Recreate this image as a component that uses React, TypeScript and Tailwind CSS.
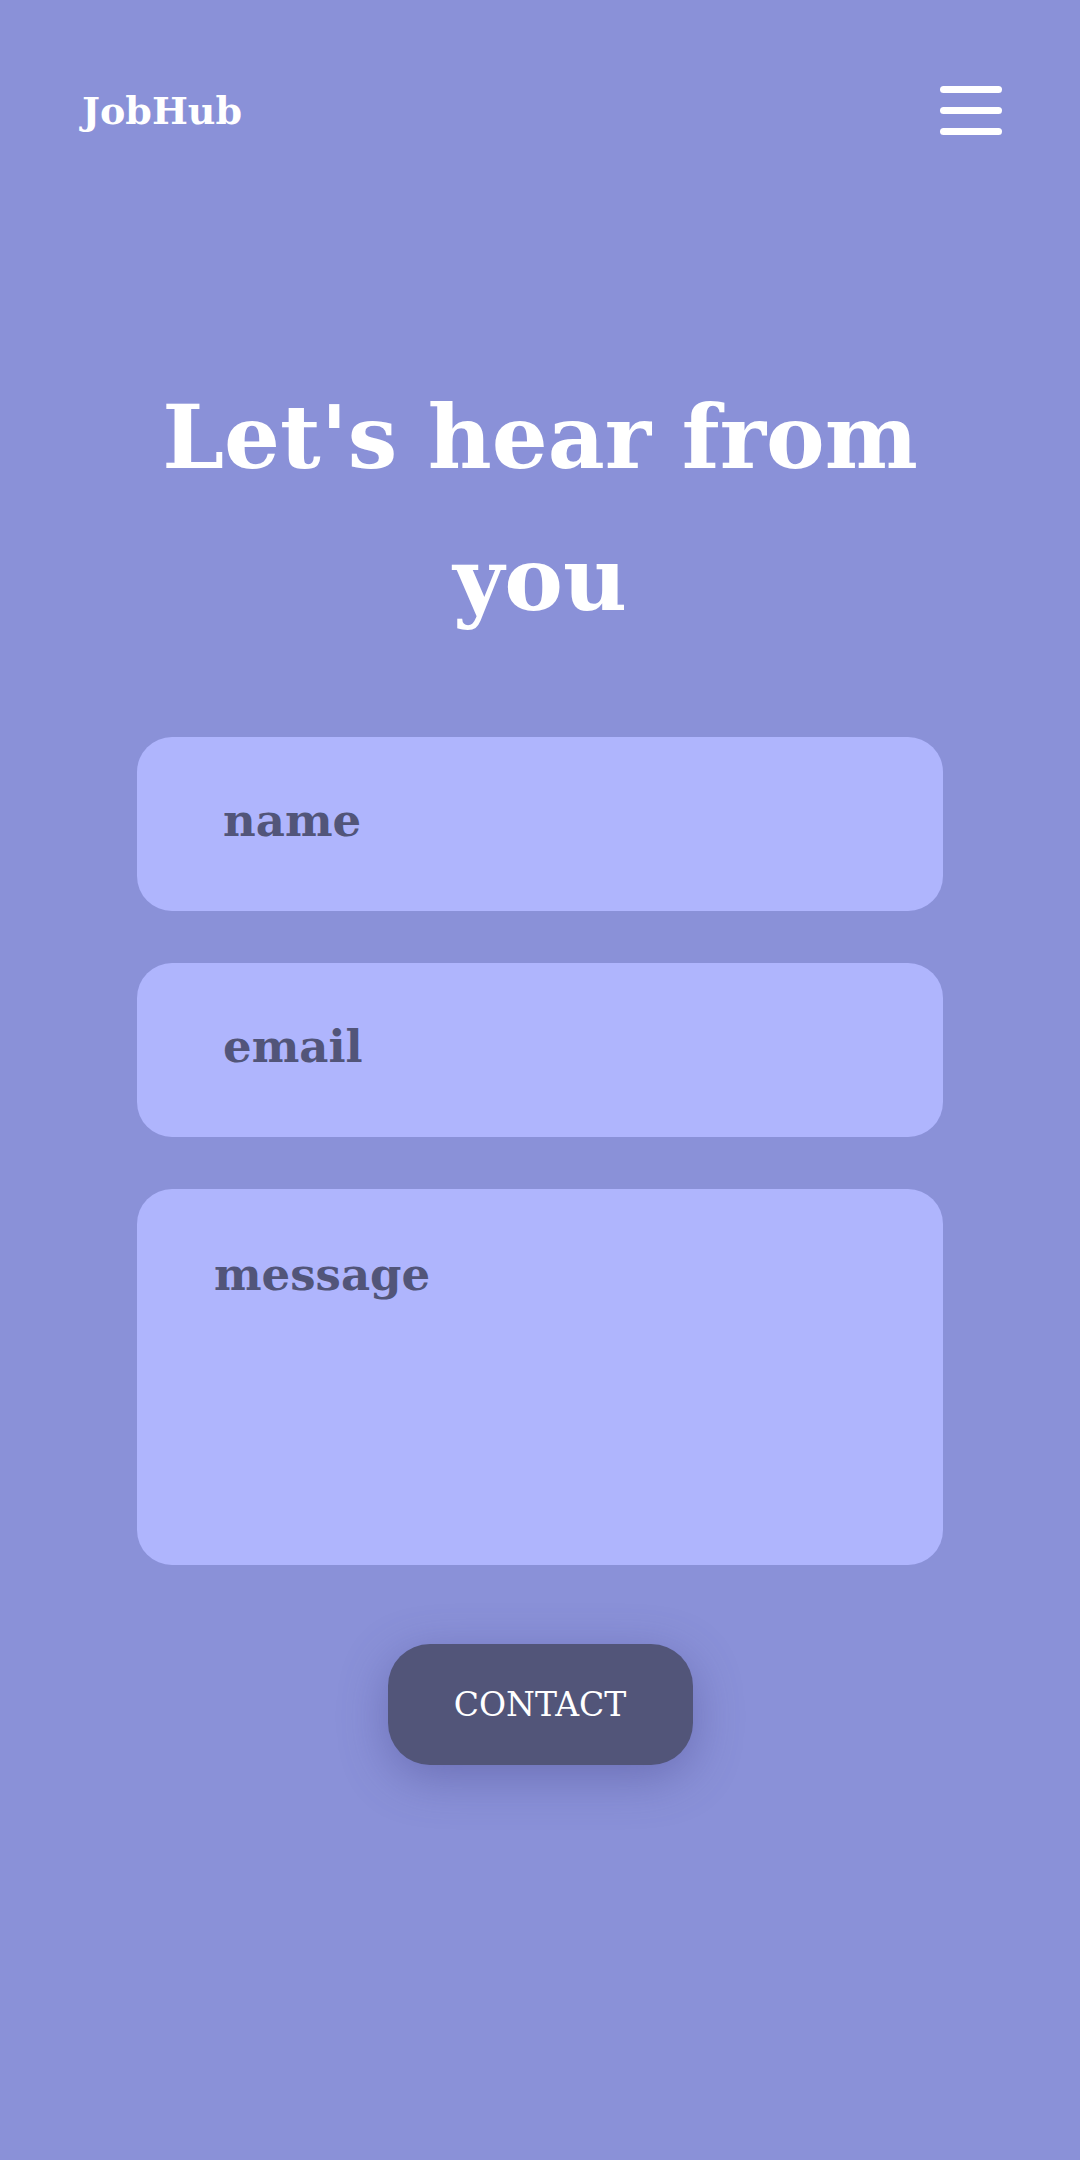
import { useState } from "react";

const serif = { fontFamily: '"DejaVu Serif", "Liberation Serif", serif' };

function Header() {
  return (
    <header className="flex items-center justify-between h-[52px] mt-[84px] pl-[82px] pr-[78px]">
      <span className="text-[38px] font-bold text-white" style={serif}>
        JobHub
      </span>
      <button className="flex flex-col gap-[14px] w-[62px]" aria-label="menu">
        <span className="block h-[7px] w-full rounded-full bg-white" />
        <span className="block h-[7px] w-full rounded-full bg-white" />
        <span className="block h-[7px] w-full rounded-full bg-white" />
      </button>
    </header>
  );
}

export default function App() {
  const [name, setName] = useState("");
  const [email, setEmail] = useState("");
  const [message, setMessage] = useState("");

  return (
    <div className="min-h-[2160px] w-full bg-[#8a91d8] flex flex-col" style={serif}>
      <Header />

      <main className="flex flex-col items-center">
        <h1 className="mt-[230px] w-[806px] text-center text-[88px] leading-[142px] font-bold text-white">
          Let's hear from you
        </h1>

        <form
          className="mt-[87px] w-[806px] flex flex-col gap-[52px]"
          onSubmit={(e) => e.preventDefault()}
        >
          <input
            value={name}
            onChange={(e) => setName(e.target.value)}
            placeholder="name"
            className="h-[174px] w-full rounded-[35px] bg-[#afb5fd] px-[86px] pb-[8px] text-[45px] font-bold text-[#525579] placeholder:text-[#525579] outline-none"
            style={serif}
          />
          <input
            value={email}
            onChange={(e) => setEmail(e.target.value)}
            placeholder="email"
            className="h-[174px] w-full rounded-[35px] bg-[#afb5fd] px-[86px] pb-[8px] text-[45px] font-bold text-[#525579] placeholder:text-[#525579] outline-none"
            style={serif}
          />
          <textarea
            value={message}
            onChange={(e) => setMessage(e.target.value)}
            placeholder="message"
            className="h-[376px] w-full resize-none rounded-[35px] bg-[#afb5fd] px-[77px] pt-[52px] text-[45px] font-bold text-[#525579] placeholder:text-[#525579] outline-none"
            style={serif}
          />
          <div className="flex justify-center mt-[27px]">
            <button
              type="submit"
              className="h-[121px] w-[305px] rounded-[42px] bg-[#525579] text-[33px] text-white shadow-[0_12px_48px_rgba(70,70,140,0.45)]"
              style={serif}
            >
              CONTACT
            </button>
          </div>
        </form>
      </main>
    </div>
  );
}
